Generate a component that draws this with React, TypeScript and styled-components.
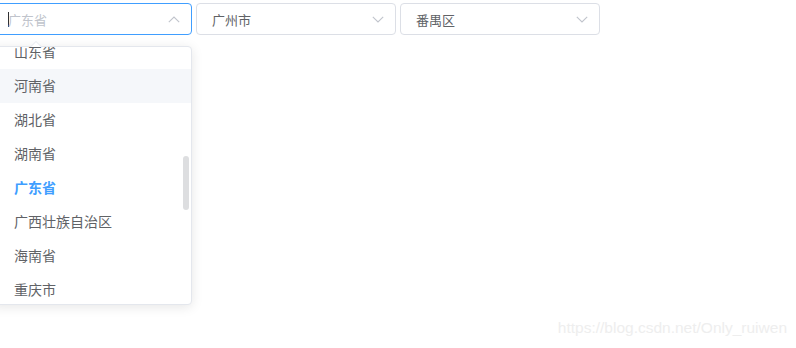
import styled, { createGlobalStyle } from "styled-components";

const GlobalStyle = createGlobalStyle`
  html, body {
    margin: 0;
    padding: 0;
    background: #fff;
  }
  body {
    width: 796px;
    height: 348px;
    overflow: hidden;
    position: relative;
    font-family: "Helvetica Neue", Helvetica, "Noto Sans CJK SC", "Microsoft YaHei", sans-serif;
  }
`;

const Row = styled.div`
  display: flex;
  gap: 4px;
  padding-top: 3px;
  margin-left: -8px;
`;

const SelectWrap = styled.div`
  position: relative;
  width: 200px;
`;

const Input = styled.div<{ $focus?: boolean }>`
  box-sizing: border-box;
  height: 32px;
  border: 1px solid ${(p) => (p.$focus ? "#409eff" : "#dcdfe6")};
  border-radius: 4px;
  padding: 0 30px 0 15px;
  display: flex;
  align-items: center;
  font-size: 13px;
  color: #606266;
  position: relative;
`;

const Placeholder = styled.span`
  color: #c0c4cc;
`;

const Caret = styled.span`
  display: inline-block;
  width: 1px;
  height: 15px;
  background: #303133;
  margin-right: -1px;
`;

const Chevron = styled.svg<{ $up?: boolean }>`
  position: absolute;
  right: 11px;
  top: 50%;
  width: 12px;
  height: 7px;
  margin-top: -3px;
  transform: ${(p) => (p.$up ? "rotate(180deg)" : "none")};
`;

// the open popper under the first select
const Dropdown = styled.div`
  position: absolute;
  top: 43px;
  left: 0;
  width: 200px;
  box-sizing: border-box;
  height: 259px;
  border: 1px solid #e4e7ed;
  border-radius: 4px;
  background: #fff;
  box-shadow: 0 2px 12px 0 rgba(0, 0, 0, 0.1);
  z-index: 10;
`;

const Arrow = styled.div`
  position: absolute;
  top: -6px;
  left: 37px;
  width: 0;
  height: 0;
  border-left: 6px solid transparent;
  border-right: 6px solid transparent;
  border-bottom: 6px solid #e4e7ed;
  &::after {
    content: "";
    position: absolute;
    left: -5px;
    top: 1px;
    border-left: 5px solid transparent;
    border-right: 5px solid transparent;
    border-bottom: 5px solid #fff;
  }
`;

const Viewport = styled.div`
  position: relative;
  height: 100%;
  overflow: hidden;
`;

const List = styled.ul`
  list-style: none;
  margin: -12px 0 0;
  padding: 0;
`;

const Item = styled.li<{ $hover?: boolean; $selected?: boolean }>`
  height: 34px;
  line-height: 34px;
  padding: 0 20px 0 21px;
  font-size: 14px;
  white-space: nowrap;
  color: ${(p) => (p.$selected ? "#409eff" : "#606266")};
  font-weight: ${(p) => (p.$selected ? 700 : 400)};
  background: ${(p) => (p.$hover ? "#f5f7fa" : "transparent")};
`;

const ScrollThumb = styled.div`
  position: absolute;
  right: 2px;
  top: 109px;
  width: 6px;
  height: 54px;
  border-radius: 4px;
  background: rgba(144, 147, 153, 0.3);
`;

const Watermark = styled.div`
  position: absolute;
  right: 9px;
  top: 319px;
  font-family: "Liberation Sans", Arial, sans-serif;
  font-size: 15.5px;
  color: #eeeeee;
`;

const provinces = [
  "山东省",
  "河南省",
  "湖北省",
  "湖南省",
  "广东省",
  "广西壮族自治区",
  "海南省",
  "重庆市",
  "四川省",
];

const ChevronIcon = ({ up }: { up?: boolean }) => (
  <Chevron $up={up} viewBox="0 0 12 7">
    <path d="M0.8 0.8 L6 6 L11.2 0.8" fill="none" stroke="#c0c4cc" strokeWidth="1.1" />
  </Chevron>
);

export default function App() {
  return (
    <>
      <GlobalStyle />
      <Row>
        <SelectWrap>
          <Input $focus>
            <Caret />
            <Placeholder>广东省</Placeholder>
            <ChevronIcon up />
          </Input>
          <Dropdown>
            <Arrow />
            <Viewport>
              <List>
                {provinces.map((p) => (
                  <Item key={p} $hover={p === "河南省"} $selected={p === "广东省"}>
                    {p}
                  </Item>
                ))}
              </List>
              <ScrollThumb />
            </Viewport>
          </Dropdown>
        </SelectWrap>
        <SelectWrap>
          <Input>
            广州市
            <ChevronIcon />
          </Input>
        </SelectWrap>
        <SelectWrap>
          <Input>
            番禺区
            <ChevronIcon />
          </Input>
        </SelectWrap>
      </Row>
      <Watermark>https://blog.csdn.net/Only_ruiwen</Watermark>
    </>
  );
}
